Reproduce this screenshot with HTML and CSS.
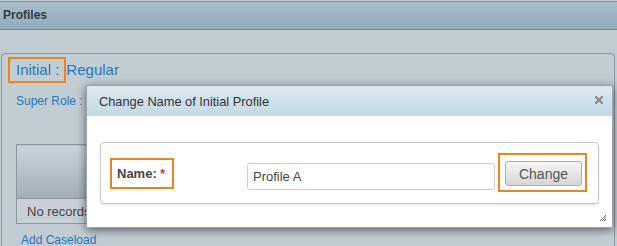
FILE: index.html
```html
<!DOCTYPE html>
<html lang="en">
<head>
    <meta charset="UTF-8">
    <title>Profiles</title>
    <link rel="stylesheet" href="styles.css">
</head>
<body>
    <div class="topbar">Profiles</div>

    <div class="panel">
        <h1 class="profile-title"><span class="mark mark-title">Initial :</span>Regular</h1>
        <div class="super-role">Super Role :</div>

        <table class="caseload-table">
            <thead>
                <tr><th></th></tr>
            </thead>
            <tbody>
                <tr><td>No records</td></tr>
            </tbody>
        </table>

        <a href="#" class="add-link">Add Caseload</a>
    </div>

    <!-- Change name dialog -->
    <div class="dialog">
        <div class="dialog-title">
            <span>Change Name of Initial Profile</span>
            <svg class="dialog-close" width="8" height="8" viewBox="0 0 8 8">
                <path d="M1 1 L7 7 M7 1 L1 7" stroke="#8c8c8c" stroke-width="2.4" stroke-linecap="square"/>
            </svg>
        </div>
        <div class="dialog-body">
            <div class="fieldset">
                <label class="mark name-label">Name: <span class="req">*</span></label>
                <input type="text" class="name-input" value="Profile A">
                <div class="mark button-mark">
                    <button class="change-btn">Change</button>
                </div>
            </div>
        </div>
        <svg class="grip" width="8" height="8" viewBox="0 0 8 8">
            <path d="M7 1 L1 7 M7 3 L3 7 M7 5 L5 7" stroke="#777" stroke-width="1"/>
        </svg>
    </div>
</body>
</html>
```

FILE: styles.css
```css
* {
    margin: 0;
    padding: 0;
    box-sizing: border-box;
}

body {
    font-family: "Liberation Sans", Arial, sans-serif;
    background: #c2cdd3;
    color: #333;
    width: 617px;
    height: 246px;
    overflow: hidden;
    position: relative;
}

.topbar {
    margin-top: 1px;
    height: 29px;
    padding-left: 3px;
    line-height: 27px;
    font-size: 12px;
    font-weight: bold;
    color: #2f3b42;
    background: linear-gradient(#a9bfcb, #91abb9);
    border-top: 1px solid #7f8e97;
    border-bottom: 1px solid #7f8e97;
}

.panel {
    margin: 23px 2px 0 1px;
    height: 220px;
    padding: 3px 0 0 6px;
    border: 1px solid #8b989f;
    border-radius: 4px 4px 0 0;
}

.mark {
    border: 2px solid #f0821e;
}

.profile-title {
    display: flex;
    align-items: center;
    font-size: 15px;
    font-weight: normal;
    color: #2279bd;
    height: 26px;
    line-height: 22px;
}

.mark-title {
    display: block;
    height: 26px;
    padding: 0 5px 0 6px;
}

.super-role {
    margin: 11px 0 0 8px;
    height: 14px;
    line-height: 14px;
    font-size: 12px;
    color: #2279bd;
}

.caseload-table {
    margin: 36px 0 0 8px;
    width: 200px;
    border-collapse: collapse;
    border: 1px solid #8b979f;
}

.caseload-table th {
    height: 54px;
    background: linear-gradient(#cad4da, #a1aeb6);
    border-bottom: 1px solid #8b979f;
}

.caseload-table td {
    height: 25px;
    padding-left: 10px;
    font-size: 13px;
    color: #444;
    background: #c6d0d6;
}

.add-link {
    display: block;
    margin: 9px 0 0 13px;
    line-height: 14px;
    font-size: 12px;
    color: #2279bd;
    text-decoration: none;
}

.dialog {
    position: absolute;
    left: 86px;
    top: 85px;
    width: 527px;
    height: 143px;
    background: white;
    border: 1px solid #9aa5ab;
    box-shadow: 0 2px 9px rgba(0, 0, 0, 0.55);
}

.dialog-title {
    height: 30px;
    padding: 0 9px 0 12px;
    display: flex;
    justify-content: space-between;
    align-items: center;
    font-size: 12.8px;
    color: #333;
    background: linear-gradient(#dce9f1, #c3d8e5);
}

.dialog-close {
    margin-top: -2px;
}

.dialog-body {
    padding: 26px 13px 0 13px;
}

.fieldset {
    height: 62px;
    border: 1px solid #c8c8c8;
    border-radius: 4px;
    box-shadow: 0 1px 2px rgba(0, 0, 0, 0.12);
    padding-left: 9px;
    display: flex;
    align-items: flex-start;
}

.name-label {
    margin-top: 15px;
    width: 64px;
    height: 31px;
    padding-left: 5px;
    line-height: 27px;
    font-size: 13px;
    font-weight: bold;
    color: #444;
}

.req {
    color: #e0262b;
    font-size: 12px;
}

.name-input {
    margin: 20px 0 0 73px;
    width: 248px;
    height: 27px;
    padding-left: 5px;
    font-family: "Liberation Sans", Arial, sans-serif;
    font-size: 13px;
    color: #444;
    border: 1px solid #cfcfcf;
    border-radius: 3px;
}

.button-mark {
    margin: 10px 0 0 3px;
    padding: 6px 3px 4px 5px;
}

.change-btn {
    display: block;
    width: 77px;
    height: 25px;
    font-family: "Liberation Sans", Arial, sans-serif;
    font-size: 14px;
    color: #555;
    background: linear-gradient(#f6f6f6, #d6d6d6);
    border: 1px solid #acacac;
    border-radius: 3px;
    cursor: pointer;
}

.grip {
    position: absolute;
    right: 5px;
    bottom: 5px;
}
```
